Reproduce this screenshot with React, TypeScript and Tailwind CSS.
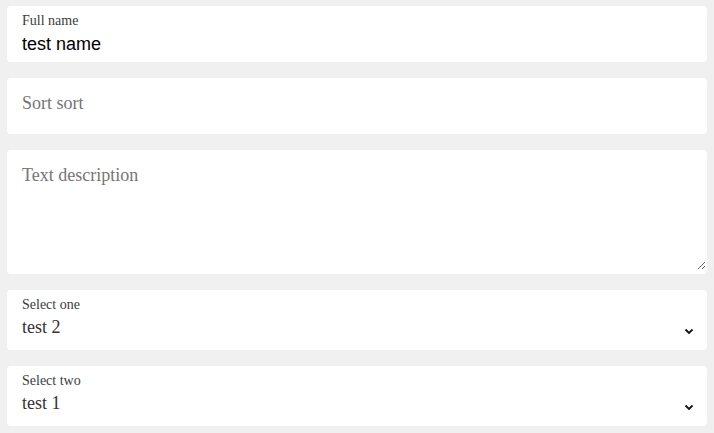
import React from "react";

const serif = "font-['Liberation_Serif','Times_New_Roman',serif]";

function Chevron() {
  return (
    <svg width="10" height="7" viewBox="0 0 10 7" className="absolute right-[13px] bottom-[15px]">
      <path d="M1.5 1.5 L5 5 L8.5 1.5" fill="none" stroke="#111" strokeWidth="1.8" />
    </svg>
  );
}

function SelectCard({ label, value }: { label: string; value: string }) {
  return (
    <div className={`relative h-[60px] rounded-[4px] bg-white px-[15px] pt-[7px] ${serif}`}>
      <div className="text-[14px] leading-[16px] text-[#3c3c3c]">{label}</div>
      <div className="mt-[3px] text-[18px] leading-[22px] text-[#333]">{value}</div>
      <Chevron />
    </div>
  );
}

export default function App() {
  return (
    <div className="min-h-[433px] w-full bg-[#f0f0f0] px-[7px] pt-[6px] pb-[7px]">
      <div className="flex flex-col gap-[16px]">
        <div className="h-[56px] rounded-[4px] bg-white px-[15px] pt-[7px]">
          <div className={`text-[14px] leading-[16px] text-[#3c3c3c] ${serif}`}>Full name</div>
          <input
            readOnly
            value="test name"
            className="mt-[4px] block h-[22px] w-full bg-transparent p-0 text-[18px] leading-[22px] text-black outline-none font-['Liberation_Sans',Arial,sans-serif]"
          />
        </div>
        <div className="h-[56px] rounded-[4px] bg-white px-[15px] pt-[14px]">
          <input
            readOnly
            placeholder="Sort sort"
            className={`block h-[22px] w-full bg-transparent p-0 text-[18px] leading-[22px] outline-none placeholder:text-[#757575] ${serif}`}
          />
        </div>
        <div className="h-[124px] rounded-[4px] bg-white pb-[4px]">
          <textarea
            readOnly
            placeholder="Text description"
            className={`block h-[120px] w-[699px] resize bg-transparent pl-[15px] pt-[14px] text-[18px] leading-[22px] outline-none placeholder:text-[#757575] ${serif}`}
          />
        </div>
        <SelectCard label="Select one" value="test 2" />
        <SelectCard label="Select two" value="test 1" />
      </div>
    </div>
  );
}
